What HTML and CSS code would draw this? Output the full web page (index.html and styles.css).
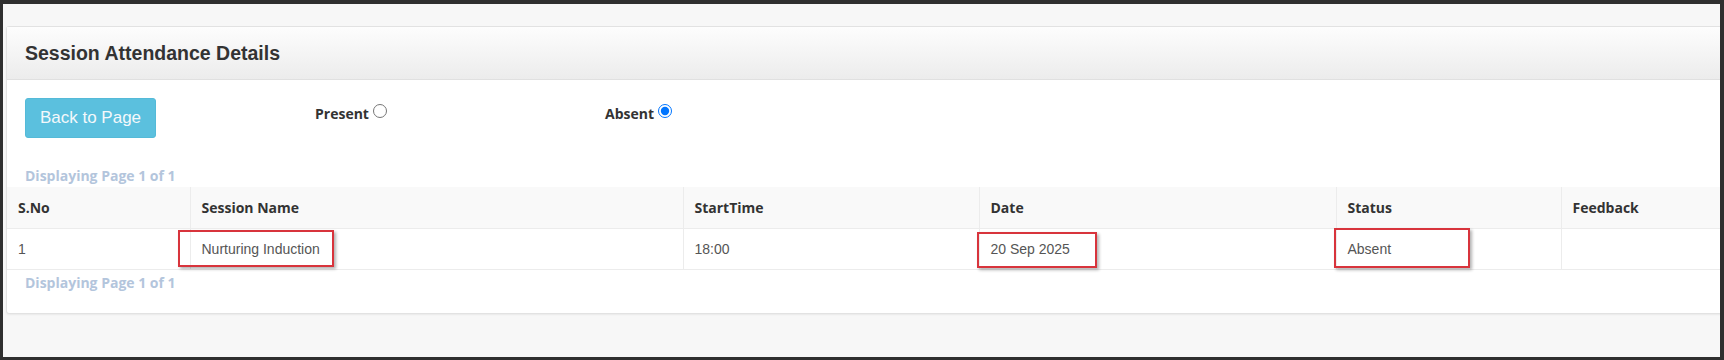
FILE: index.html
```html
<!DOCTYPE html>
<html>
<head>
    <title>Session Attendance Details</title>
    <link rel="stylesheet" href="styles.css">
</head>
<body>
    <div class="frame">
        <div class="panel">
            <div class="panel-heading">
                <h3>Session Attendance Details</h3>
            </div>
            <div class="panel-body">
                <div class="controls">
                    <div class="control">
                        <button class="btn-info" type="button">Back to Page</button>
                    </div>
                    <div class="control">
                        <label for="present">Present</label>
                        <input type="radio" id="present" name="attendance">
                    </div>
                    <div class="control">
                        <label for="absent">Absent</label>
                        <input type="radio" id="absent" name="attendance" checked>
                    </div>
                </div>
                <div class="pager">Displaying Page 1 of 1</div>
            </div>

            <table class="grid">
                <colgroup>
                    <col class="c-sno">
                    <col class="c-name">
                    <col class="c-time">
                    <col class="c-date">
                    <col class="c-status">
                    <col>
                </colgroup>
                <thead>
                    <tr>
                        <th>S.No</th>
                        <th>Session Name</th>
                        <th>StartTime</th>
                        <th>Date</th>
                        <th>Status</th>
                        <th>Feedback</th>
                    </tr>
                </thead>
                <tbody>
                    <tr>
                        <td>1</td>
                        <td>Nurturing Induction<span class="mark mark-name"></span></td>
                        <td>18:00</td>
                        <td>20 Sep 2025<span class="mark mark-date"></span></td>
                        <td>Absent<span class="mark mark-status"></span></td>
                        <td></td>
                    </tr>
                </tbody>
            </table>
            <div class="pager pager-bottom">Displaying Page 1 of 1</div>
        </div>
    </div>
</body>
</html>
```

FILE: styles.css
```css
html, body {
    margin: 0;
    padding: 0;
}

body {
    font-family: "Liberation Sans", Arial, sans-serif;
    color: #555;
}

.frame {
    box-sizing: border-box;
    height: 360px;
    overflow: hidden;
    background: #f7f7f7;
    border-style: solid;
    border-color: #2f2f2f;
    border-width: 4px 4px 3px 3px;
    padding-top: 22px;
}

.panel {
    margin-left: 3px;
    margin-right: -24px;
    background: #fff;
    border: 1px solid #e2e2e2;
    border-radius: 3px;
    box-shadow: 0 1px 2px rgba(0, 0, 0, 0.06);
}

.panel-heading {
    display: flex;
    align-items: center;
    height: 52px;
    padding: 0 18px;
    background: linear-gradient(#fdfdfd, #ececec);
    border-bottom: 1px solid #e0e0e0;
}

.panel-heading h3 {
    margin: 0;
    font-size: 19.5px;
    font-weight: bold;
    color: #333;
}

.panel-body {
    padding: 18px 18px 0;
}

.controls {
    display: grid;
    grid-template-columns: 290px 290px 290px;
    align-items: start;
}

.control {
    display: flex;
    align-items: flex-start;
}

.control label {
    padding-top: 6px;
    font-family: "Open Sans", sans-serif;
    font-size: 14px;
    font-weight: bold;
    line-height: 19px;
    color: #333;
}

.control input {
    width: 14px;
    height: 14px;
    margin: 6px 0 0 4px;
}

.btn-info {
    width: 131px;
    height: 40px;
    padding: 0;
    font-family: "Liberation Sans", Arial, sans-serif;
    font-size: 17px;
    color: #f4f8fb;
    background: #5bc0de;
    border: 1px solid #54bad8;
    border-radius: 3px;
}

.pager {
    margin: 28px 0 2px;
    font-family: "Open Sans", sans-serif;
    font-size: 14px;
    font-weight: bold;
    line-height: 19px;
    color: #b3c5dc;
}

.pager-bottom {
    margin: 3px 18px 0;
    padding-bottom: 21px;
}

.grid {
    width: 100%;
    table-layout: fixed;
    border-collapse: collapse;
    font-size: 14px;
}

.c-sno { width: 183px; }
.c-name { width: 493px; }
.c-time { width: 296px; }
.c-date { width: 357px; }
.c-status { width: 225px; }

.grid th,
.grid td {
    position: relative;
    padding: 0 11px;
    text-align: left;
    border-left: 1px solid #ececec;
    border-bottom: 1px solid #ececec;
}

.grid th:first-child,
.grid td:first-child {
    border-left: none;
}

.grid th {
    height: 41px;
    font-family: "Open Sans", sans-serif;
    font-weight: bold;
    color: #333;
    background: #f9f9f9;
}

.grid td {
    height: 40px;
    color: #555;
}

.mark {
    position: absolute;
    box-sizing: border-box;
    border: 2px solid #d8343c;
    box-shadow: 2px 2px 3px rgba(0, 0, 0, 0.3);
}

.mark-name {
    left: -13px;
    top: 1px;
    width: 156px;
    height: 37px;
}

.mark-date {
    left: -3px;
    top: 3px;
    width: 120px;
    height: 36px;
}

.mark-status {
    left: -3px;
    top: -1px;
    width: 136px;
    height: 40px;
}
```
